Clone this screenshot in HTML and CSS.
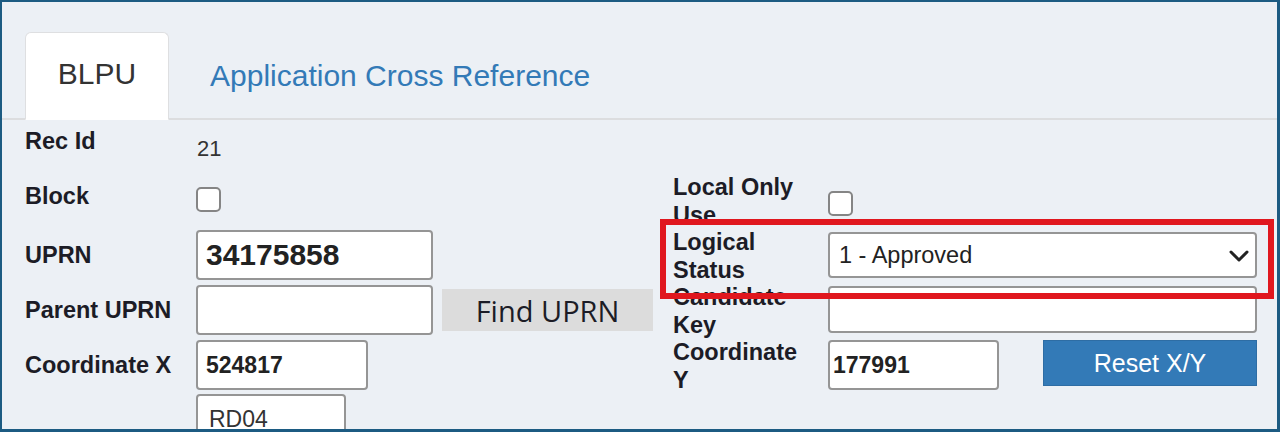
FILE: index.html
```html
<!DOCTYPE html>
<html lang="en">
<head>
<meta charset="utf-8">
<title>BLPU</title>
<link rel="stylesheet" href="styles.css">
</head>
<body>
<div class="frame">
  <ul class="tabs">
    <li class="tab active">BLPU</li>
    <li class="tab link">Application Cross Reference</li>
  </ul>
  <div class="form">
    <div class="col col-left">
      <div class="row row-recid">
        <label class="lbl">Rec Id</label>
        <span class="val">21</span>
      </div>
      <div class="row row-block">
        <label class="lbl">Block</label>
        <input type="checkbox" class="chk">
      </div>
      <div class="row row-field row-uprn">
        <label class="lbl">UPRN</label>
        <input class="inp inp-wide inp-big" value="34175858">
      </div>
      <div class="row row-field">
        <label class="lbl">Parent UPRN</label>
        <input class="inp inp-wide" value="">
        <button class="btn-find">Find UPRN</button>
      </div>
      <div class="row row-field">
        <label class="lbl">Coordinate X</label>
        <input class="inp inp-mid inp-bold" value="524817">
      </div>
      <div class="row row-field row-last">
        <label class="lbl"></label>
        <input class="inp inp-small" value="RD04">
      </div>
    </div>
    <div class="col col-right">
      <div class="rrow rrow-local">
        <label class="rlbl">Local Only Use</label>
        <input type="checkbox" class="chk chk-local">
      </div>
      <div class="rrow">
        <label class="rlbl">Logical Status</label>
        <div class="select-wrap">
          <select class="sel">
            <option>1 - Approved</option>
          </select>
          <svg class="chev" width="20" height="12" viewBox="0 0 20 12" aria-hidden="true">
            <path d="M2 2 L10 10 L18 2" fill="none" stroke="#222" stroke-width="3" stroke-linecap="round" stroke-linejoin="round"/>
          </svg>
        </div>
      </div>
      <div class="rrow">
        <label class="rlbl">Candidate Key</label>
        <input class="inp inp-cand" value="">
      </div>
      <div class="rrow">
        <label class="rlbl">Coordinate Y</label>
        <input class="inp inp-coordy inp-bold" value="177991">
        <button class="btn-reset">Reset X/Y</button>
      </div>
    </div>
  </div>
  <div class="highlight"></div>
</div>
</body>
</html>
```
FILE: styles.css
```css
* { box-sizing: border-box; }
html, body { margin: 0; padding: 0; }
body {
  width: 1280px;
  height: 432px;
  overflow: hidden;
  font-family: "Liberation Sans", Arial, sans-serif;
  background: #ecf0f5;
}
.frame {
  position: relative;
  width: 1280px;
  height: 432px;
  overflow: hidden;
  background: #ecf0f5;
  border-style: solid;
  border-color: #1c5b82;
  border-width: 2px 3px 3px 2px;
}
.tabs {
  list-style: none;
  margin: 0;
  padding: 30px 0 0 23px;
  display: flex;
  align-items: flex-end;
  border-bottom: 2px solid #dcdddf;
}
.tab {
  height: 86px;
  margin-bottom: -2px;
  padding: 0 33px;
  font-size: 30px;
  line-height: 82px;
  color: #333;
  border: 1px solid transparent;
  border-radius: 6px 6px 0 0;
}
.tab.active {
  width: 144px;
  height: 88px;
  padding: 0 0 2px;
  text-align: center;
  background: #fff;
  border-color: #dedfe1;
  border-bottom-color: #fff;
  margin-right: 7px;
}
.tab.link {
  padding: 0 0 0 33px;
  color: #337ab7;
}
.form {
  display: flex;
  padding-left: 23px;
}
.col-left {
  width: 648px;
  display: flex;
  flex-direction: column;
}
.col-right {
  flex: 1;
  display: flex;
  flex-direction: column;
  padding-top: 52px;
}
.row {
  display: flex;
  align-items: center;
}
.lbl, .rlbl {
  font-weight: bold;
  font-size: 23.5px;
  color: #1c1c26;
}
.lbl {
  flex: 0 0 171px;
  line-height: 28px;
}
.row-recid {
  margin-top: 7px;
  height: 30px;
  align-items: flex-start;
}
.val {
  padding: 8px 0 0 1px;
  font-size: 22px;
  line-height: 28px;
  color: #333;
}
.row-block {
  margin-top: 25px;
  height: 30px;
  align-items: flex-start;
}
.chk {
  appearance: none;
  -webkit-appearance: none;
  margin: 5px 0 0;
  width: 25px;
  height: 25px;
  border: 2px solid #858585;
  border-radius: 5px;
  background: #fff;
}
.row-field {
  height: 50px;
  margin-top: 5px;
}
.row-uprn { margin-top: 18px; }
.row-last { margin-top: 4px; }
.inp {
  height: 50px;
  margin: 0;
  padding: 0 8px;
  border: 2px solid #959595;
  border-radius: 4px;
  background: #fff;
  font-family: "Liberation Sans", Arial, sans-serif;
  font-size: 23px;
  color: #222;
  outline: none;
}
.inp-wide { width: 237px; }
.inp-mid { width: 172px; }
.inp-small { width: 150px; padding-left: 11px; color: #333; }
.inp-big { font-size: 30px; font-weight: bold; }
.inp-bold { font-weight: bold; }
.btn-find {
  margin-left: 9px;
  width: 211px;
  height: 42px;
  border: none;
  background: #dcdcdc;
  font-family: "Open Sans", "Noto Sans", sans-serif;
  font-size: 29px;
  color: #1c1c26;
  padding: 0;
}
.rrow {
  display: flex;
  align-items: flex-start;
  height: 55px;
}
.rlbl {
  flex: 0 0 155px;
  padding: 2px 15px 0 0;
  line-height: 27.6px;
}
.chk-local { margin-top: 19px; }
.select-wrap {
  position: relative;
  margin-top: 5px;
  width: 429px;
  height: 46px;
}
.sel {
  appearance: none;
  -webkit-appearance: none;
  width: 100%;
  height: 100%;
  margin: 0;
  padding: 0 40px 0 9px;
  border: 2px solid #959595;
  border-radius: 4px;
  background: #fff;
  font-family: "Liberation Sans", Arial, sans-serif;
  font-size: 23.5px;
  color: #222;
  outline: none;
}
.chev {
  position: absolute;
  right: 8px;
  top: 18px;
  pointer-events: none;
}
.inp-cand {
  margin-top: 4px;
  width: 429px;
  height: 47px;
}
.inp-coordy {
  margin-top: 3px;
  width: 171px;
  height: 50px;
  padding-left: 3px;
}
.btn-reset {
  margin: 3px 0 0 44px;
  width: 214px;
  height: 46px;
  padding: 0;
  border: 1px solid #2e6da4;
  background: #337ab7;
  color: #fff;
  font-family: "Liberation Sans", Arial, sans-serif;
  font-size: 25px;
}
.highlight {
  position: absolute;
  left: 658px;
  top: 217px;
  width: 614px;
  height: 80px;
  border: 6px solid #e0171e;
  pointer-events: none;
}
```
